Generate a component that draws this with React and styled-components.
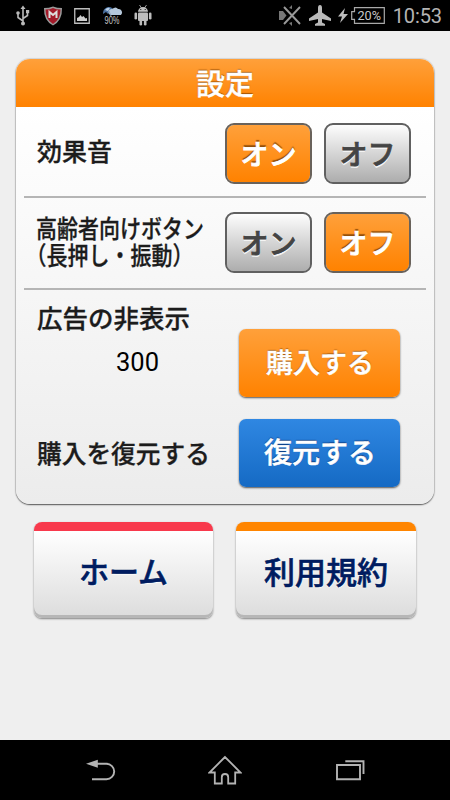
import React, { useState } from "react";
import styled, { createGlobalStyle } from "styled-components";

const GlobalStyle = createGlobalStyle`
  * {
    box-sizing: border-box;
  }
  body {
    margin: 0;
    background-color: #efefef;
    font-family: "Noto Sans CJK JP", sans-serif;
  }
`;

const ORANGE = "linear-gradient(#ffa03a, #ff8200)";
const BLUE = "linear-gradient(#2f87e2, #156ac4)";
const GREY = "linear-gradient(#fdfdfd, #adadad)";

const Screen = styled.div`
  width: 450px;
  height: 800px;
  display: flex;
  flex-direction: column;
  overflow: hidden;
  background-color: #efefef;
`;

const StatusBar = styled.header`
  flex: none;
  height: 31px;
  padding: 0 8px 0 14px;
  display: flex;
  align-items: center;
  justify-content: space-between;
  background-color: #000;
`;

const StatusGroup = styled.div`
  display: flex;
  align-items: center;
  gap: ${({ $gap }) => $gap}px;
  svg {
    display: block;
    overflow: visible;
  }
`;

const Clock = styled.time`
  margin-left: 5px;
  padding-top: 2px;
  font: 400 20px/29px Roboto, sans-serif;
  letter-spacing: -0.1px;
  color: #b4b4b4;
`;

const Content = styled.main`
  flex: 1;
  padding: 28px 16px 0;
`;

const Card = styled.section`
  height: 444.5px;
  width: 418px;
  border-radius: 14px;
  overflow: hidden;
  background: linear-gradient(#ffffff 48px, #ececec);
  box-shadow: 0 0 1px 1px rgba(0, 0, 0, 0.1), 0 1px 1.5px rgba(0, 0, 0, 0.6);
`;

const CardTitle = styled.h1`
  margin: 0;
  height: 48px;
  font-size: 29px;
  line-height: 47px;
  font-weight: 500;
  text-align: center;
  color: #fff;
  -webkit-text-stroke: 0.4px #fff;
  text-shadow: 0 -1.5px 1px rgba(120, 60, 0, 0.8);
  background: ${ORANGE};
`;

const Row = styled.div`
  height: ${({ $height }) => $height}px;
  margin: 0 8px;
  padding: ${({ $top }) => $top}px 15px 0 13px;
  display: flex;
  align-items: flex-start;
  justify-content: space-between;
  border-bottom: ${({ $divided }) => ($divided ? "2px solid #b5b5b5" : "none")};
`;

const Label = styled.div`
  width: 180px;
  margin-top: ${({ $top }) => $top || 0}px;
  font-size: ${({ $size }) => $size || 25}px;
  line-height: 27px;
  font-weight: 500;
  white-space: nowrap;
  color: #1c1c1c;
  -webkit-text-stroke: 0.3px #1c1c1c;
`;

const NarrowLabel = styled(Label)`
  margin-left: -1px;
  font-feature-settings: "halt";
  transform: scaleX(0.84);
  transform-origin: left;
`;

const FullWidth = styled.span`
  font-feature-settings: normal;
`;

const Price = styled.div`
  width: 201px;
  margin-top: 16px;
  font: 400 25.5px/32px Roboto, sans-serif;
  text-align: center;
  color: #000;
`;

const Toggle = styled.div`
  display: flex;
  gap: 12px;
`;

const ToggleButton = styled.button`
  width: 87px;
  height: 61px;
  padding: 0 0 1px;
  border: 2px solid ${({ $on }) => ($on ? "#69625b" : "#606060")};
  border-radius: 9px;
  font: 500 28px/55px "Noto Sans CJK JP", sans-serif;
  color: ${({ $on }) => ($on ? "#fff" : "#444")};
  -webkit-text-stroke: 0.8px ${({ $on }) => ($on ? "#fff" : "#444")};
  text-shadow: ${({ $on }) => ($on ? "0 -2px 1px rgba(120, 60, 0, 0.8)" : "0 2px 0 #f4f4f4")};
  background: ${({ $on }) => ($on ? ORANGE : GREY)} padding-box;
`;

const ActionButton = styled.button`
  width: 161px;
  height: 68px;
  margin: ${({ $top }) => $top || 0}px 11px 0 0;
  padding: 0 0 3px 1px;
  border: 0;
  border-radius: 7px;
  font: 500 ${({ $size }) => $size}px/65px "Noto Sans CJK JP", sans-serif;
  color: #fff;
  -webkit-text-stroke: 0.5px #fff;
  text-shadow: 0 -1.5px 1px ${({ $blue }) => ($blue ? "rgba(0, 30, 90, 0.8)" : "rgba(120, 60, 0, 0.8)")};
  background: ${({ $blue }) => ($blue ? BLUE : ORANGE)};
  box-shadow: 0 1px 2px rgba(0, 0, 0, 0.65);
`;

const Links = styled.div`
  display: flex;
  gap: 23px;
  padding: 18.5px 18px 0;
`;

const LinkButton = styled.button`
  width: ${({ $width }) => $width}px;
  height: 96px;
  padding: 0 0 8px;
  border: 0;
  border-top: 9px solid ${({ $accent }) => $accent};
  border-radius: 8px;
  font: 500 ${({ $size }) => $size}px/79px "Noto Sans CJK JP", sans-serif;
  color: #001c60;
  -webkit-text-stroke: 0.6px #001c60;
  text-shadow: 0 1px 1px #fff, 0 0 2px #fff;
  background: linear-gradient(#fff, #dcdcdc);
  box-shadow: inset 0 -3px 0 #b7b7b7, 0 1px 2px rgba(0, 0, 0, 0.45);
`;

const NavBar = styled.nav`
  flex: none;
  height: 60px;
  padding: 2px 84px 0;
  display: flex;
  align-items: center;
  justify-content: space-between;
  background-color: #000;
`;

const UsbIcon = () => (
  <svg width="17" height="21" viewBox="0 0 17 21" fill="none" stroke="#b9b9b9" strokeWidth="1.6">
    <path d="M9 3v15M9 16L4 12.5V8M9 13.5l4.500-3V7" />
    <path d="M6.5 4L9 .5 11.5 4z" fill="#b9b9b9" stroke="none" />
    <circle cx="9" cy="18.5" r="2" fill="#b9b9b9" stroke="none" />
    <circle cx="4" cy="8" r="1.8" fill="#b9b9b9" stroke="none" />
    <path d="M12 5h3.200v3.200H12z" fill="#b9b9b9" stroke="none" />
  </svg>
);

const ShieldIcon = () => (
  <svg width="20" height="20" viewBox="0 0 20 20">
    <path d="M1 2Q6 2 10 .5 14 2 19 2 19.500 14.500 10 19.500.5 14.500 1 2z" fill="#999" />
    <path d="M2.500 3.500Q7 3.500 10 2q3 1.500 7.500 1.500Q17.500 13.500 10 18 2.500 13.500 2.500 3.500z" fill="#a31929" />
    <path d="M6.500 12V6l3.500 3 3.500-3v6" fill="none" stroke="#ddd" strokeWidth="2" />
  </svg>
);

const PictureIcon = () => (
  <svg width="16" height="16" viewBox="0 0 16 16">
    <path d="M.75.75h14.500v14.500H.75z" fill="none" stroke="#bdbdbd" strokeWidth="1.3" />
    <path d="M3 13v-3l2-1 1.500-2L8 9l1.500-1 2 2.500L13 10v3z" fill="#cfcfcf" />
  </svg>
);

const WeatherIcon = () => (
  <svg width="20" height="22" viewBox="0 0 20 22">
    <path d="M1 9C1 4 4 2 7 2q4 0 5 5L8 6 6 9 4 7z" fill="#496f9e" />
    <path d="M3 5q2-3 5-2L6 6z" fill="#bcd1e8" />
    <path d="M9 10a3 3 0 0 1 1-6q4-3 6 0a3.500 3.500 0 0 1 3 6z" fill="#b5c8db" />
    <path d="M7 6l2 5" stroke="#8fa7bd" />
    <text
      x="2.5"
      y="18.5"
      fontSize="10"
      fontFamily="Liberation Sans, sans-serif"
      fill="#c4c4c4"
      textLength="15"
      lengthAdjust="spacingAndGlyphs"
    >
      90%
    </text>
  </svg>
);

const AndroidIcon = () => (
  <svg width="18" height="21" viewBox="0 0 17 21" fill="#bdbdbd">
    <path d="M3.500 6.800a5 4.800 0 0 1 10 0z" />
    <path d="M5 0l2 3M12 0l-2 3" stroke="#bdbdbd" strokeWidth=".8" />
    <rect x="3.5" y="7.5" width="10" height="8.5" rx="1" />
    <rect x="0" y="7.5" width="2.6" height="7" rx="1.3" />
    <rect x="14.4" y="7.5" width="2.6" height="7" rx="1.3" />
    <rect x="5" y="14" width="2.6" height="6.5" rx="1.3" />
    <rect x="9.4" y="14" width="2.6" height="6.5" rx="1.3" />
    <circle cx="6.3" cy="4.5" r=".6" fill="#000" />
    <circle cx="10.7" cy="4.5" r=".6" fill="#000" />
  </svg>
);

const MuteIcon = () => (
  <svg width="23" height="21" viewBox="0 0 23 21">
    <path d="M0 6h4l3.500 4.500L4 15H0z" fill="#777" />
    <path d="M10 3l3-3v4zM10 18l3 3v-4z" fill="#777" />
    <path d="M5 2l16 17M21 2L5 19" stroke="#999" strokeWidth="1.9" />
  </svg>
);

const PlaneIcon = () => (
  <svg width="22" height="21" viewBox="0 0 22 21" fill="#bababa">
    <path d="M11 0q2 0 2 3v4.500l9 6V16l-9-2v3.500l3 1.500v1.800H6V19l3-1.500V14l-9 2v-2.500l9-6V3Q9 0 11 0z" />
  </svg>
);

const BoltIcon = () => (
  <svg width="10" height="15" viewBox="0 0 10 15" fill="#bdbdbd">
    <path d="M7 0L0 8.500h4L2 15l8-9H5.500z" />
  </svg>
);

const BatteryIcon = () => (
  <svg width="34" height="17" viewBox="0 0 34 17">
    <path d="M3.500.7h29.800v15.600H3.500v-4H.7V4.700h2.800z" fill="none" stroke="#a9a9a9" strokeWidth="1.2" />
    <text
      x="6.5"
      y="12.8"
      fontSize="12"
      fontFamily="Roboto, sans-serif"
      fontWeight="400"
      fill="#c8c8c8"
      textLength="23.5"
      lengthAdjust="spacingAndGlyphs"
    >
      20%
    </text>
  </svg>
);

const BackIcon = () => (
  <svg width="34" height="34" viewBox="84 754 34 34">
    <path d="M96 763.800h10.500a7.700 7.700 0 0 1 0 15.400H92" fill="none" stroke="#b3b3b3" strokeWidth="1.9" />
    <path d="M86 763.800l11.800-4v8z" fill="#b3b3b3" />
  </svg>
);

const HomeIcon = () => (
  <svg width="34" height="34" viewBox="208 754 34 34">
    <path
      d="M225 757l-15.500 15.500h5.300v11h7v-6.300a3.200 3.200 0 0 1 6.400 0v6.300h7v-11h5.300z"
      fill="none"
      stroke="#b3b3b3"
      strokeWidth="1.8"
    />
  </svg>
);

const RecentsIcon = () => (
  <svg width="34" height="34" viewBox="332 754 34 34" fill="none" stroke="#b3b3b3" strokeWidth="1.9">
    <path d="M337 765h23v14.300h-23zM345.300 761.300h18.200V774" />
  </svg>
);

const OnOff = ({ value, onChange }) => (
  <Toggle>
    <ToggleButton $on={value} onClick={() => onChange(true)}>
      オン
    </ToggleButton>
    <ToggleButton $on={!value} onClick={() => onChange(false)}>
      オフ
    </ToggleButton>
  </Toggle>
);

const App = () => {
  const [sound, setSound] = useState(true);
  const [seniorButtons, setSeniorButtons] = useState(false);

  return (
    <Screen>
      <GlobalStyle />
      <StatusBar>
        <StatusGroup $gap={11.7}>
          <UsbIcon />
          <ShieldIcon />
          <PictureIcon />
          <WeatherIcon />
          <AndroidIcon />
        </StatusGroup>
        <StatusGroup $gap={7}>
          <MuteIcon />
          <PlaneIcon />
          <StatusGroup $gap={3}>
            <BoltIcon />
            <BatteryIcon />
            <Clock>10:53</Clock>
          </StatusGroup>
        </StatusGroup>
      </StatusBar>
      <Content>
        <Card>
          <CardTitle>設定</CardTitle>
          <Row $height={91} $top={16} $divided>
            <Label $top={14}>効果音</Label>
            <OnOff value={sound} onChange={setSound} />
          </Row>
          <Row $height={92} $top={14} $divided>
            <NarrowLabel $top={2}>
              高齢者向けボタン
              <br />
              （長押し<FullWidth>・</FullWidth>振動）
            </NarrowLabel>
            <OnOff value={seniorButtons} onChange={setSeniorButtons} />
          </Row>
          <Row $height={108} $top={13}>
            <div>
              <Label $size={25.5}>広告の非表示</Label>
              <Price>300</Price>
            </div>
            <ActionButton $size={27} $top={26}>
              購入する
            </ActionButton>
          </Row>
          <Row $height={105} $top={21}>
            <Label $top={20} $size={24.7}>
              購入を復元する
            </Label>
            <ActionButton $size={28} $blue>
              復元する
            </ActionButton>
          </Row>
        </Card>
        <Links>
          <LinkButton $width={179} $size={30} $accent="#f8394c">
            ホーム
          </LinkButton>
          <LinkButton $width={180} $size={31} $accent="#ff8500">
            利用規約
          </LinkButton>
        </Links>
      </Content>
      <NavBar>
        <BackIcon />
        <HomeIcon />
        <RecentsIcon />
      </NavBar>
    </Screen>
  );
};

export default App;
